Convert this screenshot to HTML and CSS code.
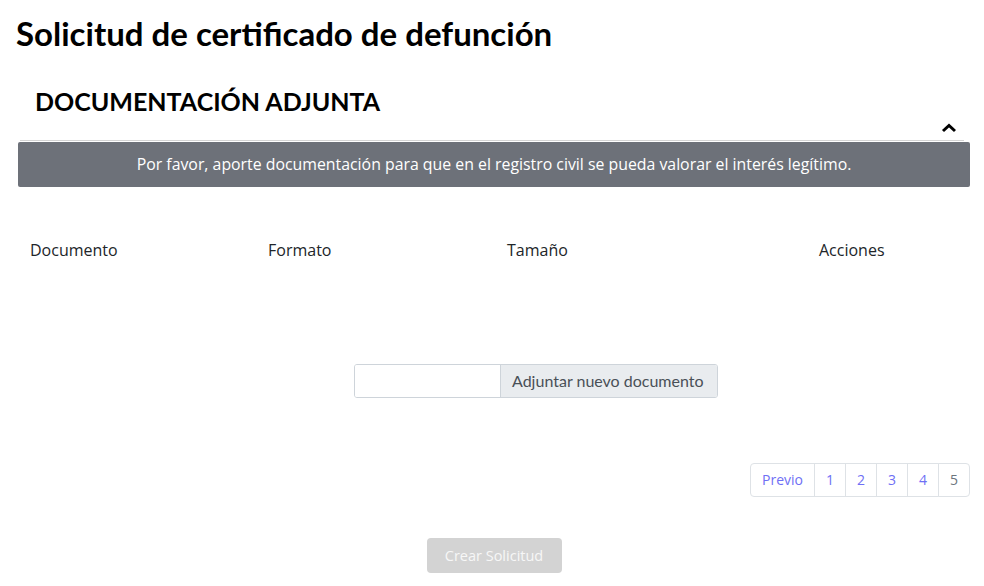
FILE: index.html
```html
<!DOCTYPE html>
<html lang="es">
<head>
<meta charset="utf-8">
<link rel="stylesheet" href="styles.css">
</head>
<body>
<div class="page">
  <h1 class="title">Solicitud de certificado de defunción</h1>
  <section class="section">
    <div class="section-head">
      <h2 class="section-title">DOCUMENTACIÓN ADJUNTA</h2>
      <svg class="chevron" width="16" height="10" viewBox="0 0 16 10"><path d="M2 8 L8 2.5 L14 8" fill="none" stroke="#000" stroke-width="3"/></svg>
    </div>
    <div class="banner">Por favor, aporte documentación para que en el registro civil se pueda valorar el interés legítimo.</div>
    <div class="table-head">
      <div class="col c1">Documento</div>
      <div class="col c2">Formato</div>
      <div class="col c3">Tamaño</div>
      <div class="col c4">Acciones</div>
    </div>
    <div class="upload-row">
      <div class="input-group">
        <div class="file-input"></div>
        <div class="file-btn">Adjuntar nuevo documento</div>
      </div>
    </div>
    <div class="pager-row">
      <ul class="pager">
        <li class="pg prev">Previo</li>
        <li class="pg">1</li>
        <li class="pg">2</li>
        <li class="pg">3</li>
        <li class="pg">4</li>
        <li class="pg muted">5</li>
      </ul>
    </div>
    <div class="submit-row">
      <button class="submit" disabled>Crear Solicitud</button>
    </div>
  </section>
</div>
</body>
</html>
```
FILE: styles.css
```css
* { box-sizing: border-box; }
html, body { margin: 0; padding: 0; background: #fff; }
body { font-family: "Open Sans", "Liberation Sans", sans-serif; color: #212529; }
.page { padding: 0 14px 0 18px; }
.title {
  font-family: Lato, "Liberation Sans", sans-serif;
  font-weight: 700;
  font-size: 33px;
  line-height: 36px;
  margin: 0;
  padding-top: 15px;
  margin-left: -2px;
  color: #000;
}
.section-head {
  position: relative;
  height: 60px;
  margin-top: 30px;
  margin-right: 6px;
  border-bottom: 1px solid #d4d4d4;
  margin-left: 2px;
}
.section-title {
  font-family: Lato, "Liberation Sans", sans-serif;
  font-weight: 700;
  font-size: 25px;
  line-height: 30px;
  margin: 0;
  padding-left: 15px;
  padding-top: 5px;
  color: #000;
}
.chevron { position: absolute; right: 7px; top: 42px; }
.banner {
  background: #6d7179;
  color: #fff;
  text-align: center;
  font-size: 15.85px;
  line-height: 24px;
  padding: 10px 0 11px;
  border-radius: 2px;
  margin-top: 1px;
}
.table-head {
  display: flex;
  margin-top: 52px;
  font-size: 16px;
  line-height: 22px;
}
.col { padding-left: 12px; }
.c1 { width: 238px; }
.c2 { width: 239px; }
.c3 { width: 312px; }
.c4 { flex: 1; }
.upload-row {
  display: flex;
  margin-top: 103px;
  padding-left: 336px;
}
.input-group {
  display: flex;
  height: 34px;
  border: 1px solid #ced4da;
  border-radius: 3px;
  overflow: hidden;
}
.file-input { width: 146px; background: #fff; border-right: 1px solid #ced4da; }
.file-btn {
  width: 216px;
  background: #e9ecef;
  color: #495057;
  font-family: Lato, "Liberation Sans", sans-serif;
  font-size: 16px;
  line-height: 32px;
  padding-left: 11px;
  white-space: nowrap;
}
.pager-row {
  display: flex;
  justify-content: flex-end;
  margin-top: 65px;
}
.pager {
  display: flex;
  list-style: none;
  margin: 0;
  padding: 0;
}
.pg {
  height: 34px;
  width: 32px;
  border: 1px solid #dee2e6;
  margin-left: -1px;
  color: #6f6ff5;
  font-size: 14px;
  line-height: 32px;
  text-align: center;
  background: #fff;
}
.pg.prev { width: 65px; margin-left: 0; border-radius: 4px 0 0 4px; }
.pg:last-child { border-radius: 0 4px 4px 0; }
.pg.muted { color: #6c757d; }
.submit-row {
  display: flex;
  justify-content: center;
  margin-top: 41px;
}
.submit {
  width: 135px;
  height: 35px;
  background: #d3d3d3;
  color: #f7f7f7;
  border: none;
  border-radius: 4px;
  font-family: "Open Sans", "Liberation Sans", sans-serif;
  font-size: 14.5px;
  padding: 0;
}
```
